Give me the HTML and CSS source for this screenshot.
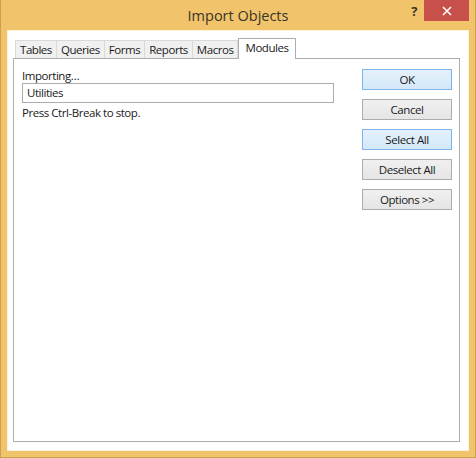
FILE: index.html
```html
<!DOCTYPE html>
<html lang="en">
<head>
    <meta charset="UTF-8">
    <title>Import Objects</title>
    <link rel="stylesheet" href="styles.css">
</head>
<body>
    <div class="window">
        <div class="title-bar">
            <span class="title">Import Objects</span>
            <span class="help-btn">?</span>
            <span class="close-btn">
                <svg width="10" height="10" viewBox="0 0 10 10">
                    <path d="M1 1 L9 9 M9 1 L1 9" stroke="#fff" stroke-width="1.6"/>
                </svg>
            </span>
        </div>

        <div class="client">
            <div class="tabs">
                <div class="tab">Tables</div>
                <div class="tab">Queries</div>
                <div class="tab">Forms</div>
                <div class="tab">Reports</div>
                <div class="tab">Macros</div>
                <div class="tab active">Modules</div>
            </div>

            <div class="panel">
                <div class="progress">
                    <div class="label">Importing…</div>
                    <div class="text-box">Utilities</div>
                    <div class="label hint">Press Ctrl-Break to stop.</div>
                </div>

                <div class="buttons">
                    <button class="btn focused">OK</button>
                    <button class="btn">Cancel</button>
                    <button class="btn focused">Select All</button>
                    <button class="btn">Deselect All</button>
                    <button class="btn">Options &gt;&gt;</button>
                </div>
            </div>
        </div>
    </div>
</body>
</html>
```

FILE: styles.css
```css
body {
    margin: 0;
    font-family: 'Open Sans', 'Noto Sans', sans-serif;
    font-size: 11.5px;
    letter-spacing: -0.45px;
    color: #1a1a1a;
}

.window {
    width: 476px;
    height: 458px;
    box-sizing: border-box;
    background-color: #f1c46c;
    border: 1px solid #c9a04e;
    border-top: none;
    display: flex;
    flex-direction: column;
}

.title-bar {
    height: 30px;
    position: relative;
    display: flex;
    align-items: center;
    justify-content: center;
}

.title {
    font-size: 14.5px;
    letter-spacing: 0;
    color: #3a3327;
    margin-top: 1px;
}

.help-btn {
    position: absolute;
    top: 2px;
    right: 58px;
    font-size: 13px;
    font-weight: bold;
    color: #3a3327;
}

.close-btn {
    position: absolute;
    top: 0;
    right: 6px;
    width: 45px;
    height: 21px;
    background-color: #c7504a;
    display: flex;
    align-items: center;
    justify-content: center;
}

.client {
    flex: 1;
    margin: 0 6px 6px 6px;
    background-color: #fff;
    box-shadow: inset 0 0 0 1px #fdf3dc;
    padding: 8px 9px 9px 6px;
    display: flex;
    flex-direction: column;
}

.tabs {
    display: flex;
    align-items: flex-end;
    padding-left: 2px;
    height: 20px;
}

.tab {
    height: 17px;
    line-height: 17px;
    padding: 0 4px;
    background-color: #f0f0f0;
    border: 1px solid #d9d9d9;
    border-bottom: none;
    margin-right: -1px;
}

.tab.active {
    height: 20px;
    line-height: 18px;
    padding: 0 6px;
    background-color: #fff;
    border-color: #adadad;
    position: relative;
    top: 1px;
    margin-left: 1px;
}

.panel {
    flex: 1;
    border: 1px solid #adadad;
    display: flex;
    padding: 10px 7px 0 8px;
}

.progress {
    flex: 1;
}

.label {
    line-height: 14px;
}

.hint {
    margin-top: 3px;
}

.text-box {
    width: 306px;
    height: 18px;
    line-height: 18px;
    border: 1px solid #abadb3;
    padding-left: 4px;
}

.buttons {
    display: flex;
    flex-direction: column;
    gap: 9px;
}

.btn {
    width: 90px;
    height: 21px;
    font-family: inherit;
    font-size: 11.5px;
    letter-spacing: -0.45px;
    color: #1a1a1a;
    background: linear-gradient(#f0f0f0, #e5e5e5);
    border: 1px solid #acacac;
    padding: 0;
}

.btn.focused {
    background: linear-gradient(#e5f1fb, #d4e8f9);
    border-color: #7eb4ea;
}
```
